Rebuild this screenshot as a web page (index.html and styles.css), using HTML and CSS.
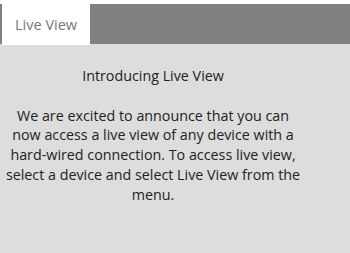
FILE: index.html
```html
<!DOCTYPE html>
<html>
<head>
<meta charset="utf-8">
<link rel="stylesheet" href="styles.css">
</head>
<body>
<div class="app">
  <div class="tabbar">
    <div class="tab">Live View</div>
  </div>
  <div class="content">
    <div class="message">
      <p class="title">Introducing Live View</p>
      <p class="text">We are excited to announce that you can now access a live view of any device with a hard-wired connection. To access live view, select a device and select Live View from the menu.</p>
    </div>
  </div>
</div>
</body>
</html>
```
FILE: styles.css
```css
html, body {
  margin: 0;
  padding: 0;
  background: #ffffff;
}
body {
  font-family: "Open Sans", "Noto Sans", sans-serif;
  width: 350px;
  height: 253px;
  overflow: hidden;
}
.app {
  display: flex;
  flex-direction: column;
  height: 253px;
  padding-top: 4px;
  box-sizing: border-box;
}
.tabbar {
  height: 40px;
  background: #808080;
  display: flex;
  padding-left: 2px;
  flex-shrink: 0;
}
.tab {
  width: 88px;
  height: 41px;
  background: #ffffff;
  color: #777777;
  font-size: 14.5px;
  line-height: 42px;
  padding-left: 13px;
  box-sizing: border-box;
  position: relative;
  z-index: 1;
}
.content {
  flex: 1;
  background: #dddddd;
}
.message {
  width: 298px;
  margin-left: 4px;
  text-align: center;
  color: #222222;
  font-size: 14.3px;
  line-height: 19.7px;
  padding-top: 22px;
}
.title {
  margin: 0 0 20px 0;
}
.text {
  margin: 0;
}
```
